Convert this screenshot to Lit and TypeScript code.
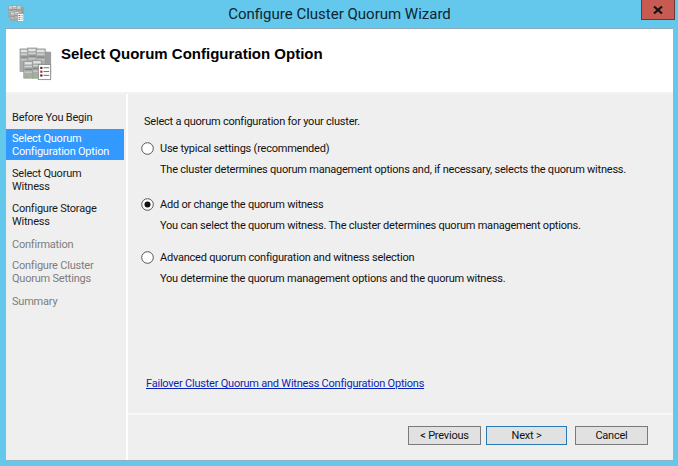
import { LitElement, html, css, svg } from "lit";
import { customElement } from "lit/decorators.js";

const server = (x: number, y: number, h: number) => svg`
  <rect x=${x} y=${y} width="10" height=${h} fill="#a9acaa" stroke="#8f928f" stroke-width=".6"/>
  <rect x=${x + 1} y=${y + 1} width="8" height="2.4" fill="#e2e4e2"/>
  <rect x=${x + 1} y=${y + 5} width="8" height="1.4" fill="#d2d4d2"/>
  <rect x=${x + 1} y=${y + 8} width="8" height="1.4" fill="#808381"/>
  <rect x=${x + 1} y=${y + 11} width="8" height="1.4" fill="#c8cac8"/>`;

const clusterIcon = svg`
  <rect x="25" y="5" width="9" height="24" fill="#9b9e9c"/>
  ${server(1, 2, 24)}${server(9, 1, 24)}${server(18, 2, 24)}${server(5, 15, 18)}${server(14, 14, 19)}
  <rect x="7" y="30.5" width="2.4" height="2.2" fill="#7ccb45"/>
  <rect x="15.5" y="31" width="2.4" height="2.2" fill="#7ccb45"/>
  <rect x="20.5" y="18.5" width="13" height="16" fill="#fff" stroke="#8e8e8e"/>
  <rect x="22.5" y="21" width="2.3" height="2.3" fill="#333"/>
  <rect x="22.5" y="25" width="2.3" height="2.3" fill="#c4232b"/>
  <rect x="22.5" y="29" width="2.3" height="2.3" fill="#333"/>
  <path d="M26 22h6M26 26h6M26 30h6" stroke="#666" stroke-width="1"/>`;

const radio = (on: boolean) => html`<svg class="radio" width="13" height="13" viewBox="0 0 13 13" aria-hidden="true">
  <circle cx="6.5" cy="6.5" r="5.8" fill="#fff" stroke="#555" stroke-width="1"/>
  ${on ? svg`<circle cx="6.5" cy="6.5" r="3" fill="#111"/>` : ""}
</svg>`;

const steps = [
  { t: ["Before You Begin"], c: "m4" },
  { t: ["Select Quorum", "Configuration Option"], c: "sel m3" },
  { t: ["Select Quorum", "Witness"], c: "m4" },
  { t: ["Configure Storage", "Witness"], c: "m5" },
  { t: ["Confirmation"], c: "off m3" },
  { t: ["Configure Cluster", "Quorum Settings"], c: "off m5" },
  { t: ["Summary"], c: "off" },
];

const options = [
  { l: "Use typical settings (recommended)", d: "The cluster determines quorum management options and, if necessary, selects the quorum witness.", on: false },
  { l: "Add or change the quorum witness", d: "You can select the quorum witness. The cluster determines quorum management options.", on: true },
  { l: "Advanced quorum configuration and witness selection", d: "You determine the quorum management options and the quorum witness.", on: false },
];

@customElement("app-root")
export class AppRoot extends LitElement {
  static styles = css`
    :host {
      display: flex;
      flex-direction: column;
      width: 678px;
      height: 466px;
      box-sizing: border-box;
      padding: 0 5px 6px 6px;
      background: #63c8ec;
      font-family: Roboto, "Open Sans", sans-serif;
      font-size: 11px;
      letter-spacing: -0.22px;
      color: #111;
      overflow: hidden;
      position: relative;
    }
    .titlebar {
      height: 29px;
      flex: none;
      display: flex;
      align-items: center;
      justify-content: center;
      font-size: 15px;
      letter-spacing: 0;
      color: #0f2530;
      position: relative;
      padding-bottom: 1px;
      box-sizing: border-box;
    }
    .sysicon { position: absolute; left: 2px; top: 5px; }
    .close {
      position: absolute;
      right: -2px;
      top: 0;
      width: 34px;
      height: 20px;
      box-sizing: border-box;
      background: #c75b52;
      border: 1px solid #6b3733;
      border-top: none;
      display: flex;
      align-items: center;
      justify-content: center;
    }
    .window {
      flex: 1;
      display: flex;
      flex-direction: column;
      min-height: 0;
      box-shadow: 0 -1px 0 #8fa9b8, 0 1px 0 #8fb3c4;
    }
    .header {
      height: 65px;
      flex: none;
      background: #fff;
      display: flex;
      align-items: center;
      gap: 8px;
      padding: 0 0 0 13px;
      box-sizing: border-box;
      border-bottom: 2px solid #f2f2f2;
    }
    .header svg { margin-top: 6px; }
    .header h1 {
      margin: 0 0 15px;
      font-family: "Liberation Sans", Arial, sans-serif;
      font-size: 15px;
      font-weight: 700;
      letter-spacing: 0;
      color: #000;
    }
    .body { flex: 1; display: flex; min-height: 0; background: #fff; }
    .nav {
      width: 120px;
      flex: none;
      background: #efefef;
      padding-top: 13px;
      box-sizing: border-box;
      display: flex;
      flex-direction: column;
      line-height: 13px;
      margin-right: 2px;
    }
    .step { padding: 4px 0 1px 6px; width: 118px; box-sizing: border-box; color: #1a1a1a; }
    .step span { display: block; white-space: nowrap; }
    .step.m3 { margin-bottom: 3px; }
    .step.m4 { margin-bottom: 4px; }
    .step.m5 { margin-bottom: 5px; }
    .step.sel { background: #3399ff; color: #fff; padding-top: 3px; padding-bottom: 2px; }
    .step.off { color: #7d7d7d; }
    .main { flex: 1; display: flex; flex-direction: column; background: #efefef; min-width: 0; }
    .content { flex: 1; display: flex; flex-direction: column; padding: 20px 0 0 13px; }
    .intro { margin: 0 0 11px 3px; line-height: 16px; }
    .opt { display: grid; grid-template-columns: 13px 1fr; column-gap: 6px; align-items: center; }
    .opt + .opt { margin-top: 19px; }
    .opt .radio { margin-top: -2px; }
    .opt .label { line-height: 16px; }
    .opt .desc { grid-column: 2; margin-top: 5px; line-height: 16px; white-space: nowrap; }
    .opt.third { margin-top: 16px; }
    .link {
      margin: auto 0 0 5px;
      padding-bottom: 21px;
      color: #0a1fb5;
      text-decoration: underline;
      line-height: 16px;
    }
    .footer {
      flex: none;
      height: 47px;
      border-top: 2px solid #f8f8f8;
      box-sizing: border-box;
      display: flex;
      padding: 11px 25px 0 280px;
      gap: 5px;
    }
    .btn {
      width: 73px;
      height: 19px;
      box-sizing: border-box;
      border: 1px solid #7a7a7a;
      background: #e1e1e1;
      display: flex;
      align-items: center;
      justify-content: center;
      color: #111;
    }
    .btn.primary { width: 81px; border-color: #2a78b4; margin-right: 3px; }
  `;

  render() {
    return html`
      <div class="titlebar">
        <svg class="sysicon" width="17" height="17" viewBox="0 0 36 36" aria-hidden="true">${clusterIcon}</svg>
        Configure Cluster Quorum Wizard
        <div class="close">
          <svg width="10" height="8" viewBox="0 0 10 8" aria-hidden="true"><path d="M1 .5 9 7.5M9 .5 1 7.5" stroke="#111" stroke-width="2.1"/></svg>
        </div>
      </div>
      <div class="window">
        <div class="header">
          <svg width="34" height="34" viewBox="0 0 36 36" aria-hidden="true">${clusterIcon}</svg>
          <h1>Select Quorum Configuration Option</h1>
        </div>
        <div class="body">
          <div class="nav">
            ${steps.map((s) => html`<div class="step ${s.c}">${s.t.map((l) => html`<span>${l}</span>`)}</div>`)}
          </div>
          <div class="main">
            <div class="content">
              <p class="intro">Select a quorum configuration for your cluster.</p>
              ${options.map((o, i) => html`<div class="opt ${i === 2 ? "third" : ""}">
                ${radio(o.on)}
                <div class="label">${o.l}</div>
                <div class="desc">${o.d}</div>
              </div>`)}
              <div class="link">Failover Cluster Quorum and Witness Configuration Options</div>
            </div>
            <div class="footer">
              <div class="btn">&lt; Previous</div>
              <div class="btn primary">Next &gt;</div>
              <div class="btn">Cancel</div>
            </div>
          </div>
        </div>
      </div>
    `;
  }
}
